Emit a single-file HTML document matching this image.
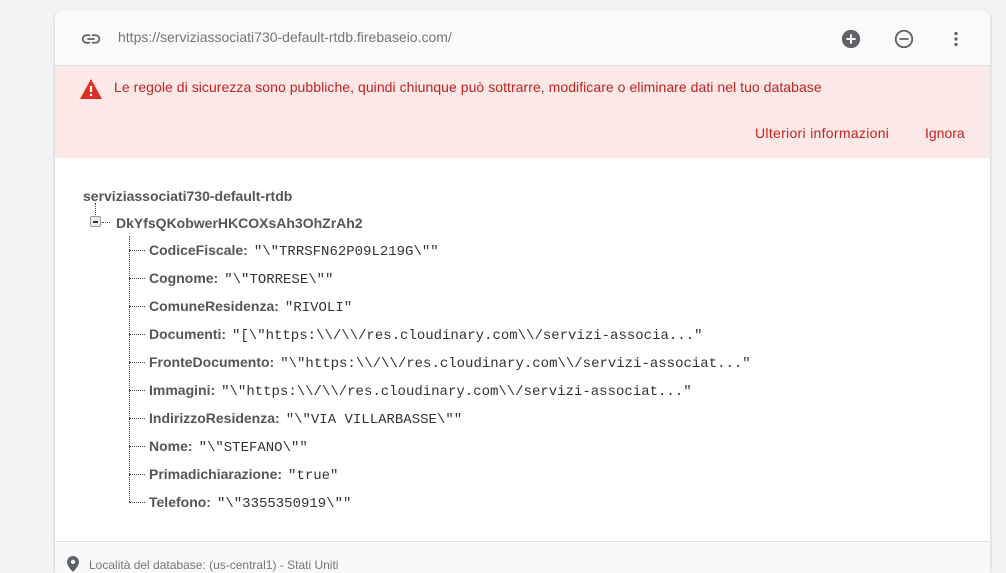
<!DOCTYPE html>
<html><head><meta charset="utf-8"><style>
*{box-sizing:border-box;margin:0;padding:0}
html,body{width:1006px;height:573px;overflow:hidden}
body{background:#f1f3f4;font-family:"Liberation Sans",sans-serif;position:relative}
.card{position:absolute;left:55px;top:10px;width:935px;height:563px;background:#fff;border-radius:8px 8px 0 0;box-shadow:0 1px 3px rgba(0,0,0,.2);overflow:hidden}
.hdr{height:56px;background:#fafafa;border-bottom:1px solid #e0e0e0;position:relative}
.url{position:absolute;left:63px;top:19px;font-size:14px;color:#757575}
.alert{height:92px;background:#fce8e6;position:relative;color:#c5221f;font-size:14px}
.t{position:absolute;white-space:nowrap}
.k{font-weight:bold;color:#555;font-size:14px}
.v{font-family:"Liberation Mono",monospace;color:#333;font-size:14px;margin-left:6px;font-weight:normal}
.row{position:absolute;left:94px;white-space:nowrap;line-height:16px}
.hl{position:absolute;left:74px;width:16px;border-top:1px dotted #444}
.foot{position:absolute;left:0;top:531px;width:935px;height:40px;background:#f8f9fa;border-top:1px solid #e0e0e0}
</style></head><body>
<div class="card">
 <div class="hdr">
  <svg style="position:absolute;left:25px;top:18px" width="22" height="22" viewBox="0 0 24 24"><path fill="#5f6368" d="M3.9 12c0-1.71 1.39-3.1 3.1-3.1h4V7H7c-2.76 0-5 2.240-5 5s2.24 5 5 5h4v-1.9H7c-1.71 0-3.1-1.39-3.1-3.1zM8 13h8v-2H8v2zm9-6h-4v1.9h4c1.71 0 3.1 1.39 3.1 3.1s-1.39 3.1-3.1 3.1h-4V17h4c2.76 0 5-2.24 5-5s-2.24-5-5-5z"/></svg>
  <div class="url">https://serviziassociati730-default-rtdb.firebaseio.com/</div>
  <svg style="position:absolute;left:785px;top:18px" width="22" height="22" viewBox="0 0 24 24"><circle cx="12" cy="12" r="10" fill="#5f6368"/><path d="M12 7v10M7 12h10" stroke="#fff" stroke-width="2.2"/></svg>
  <svg style="position:absolute;left:838px;top:18px" width="22" height="22" viewBox="0 0 24 24"><circle cx="12" cy="12" r="9" fill="none" stroke="#5f6368" stroke-width="2"/><path d="M7 12h10" stroke="#5f6368" stroke-width="2"/></svg>
  <svg style="position:absolute;left:890px;top:18px" width="22" height="22" viewBox="0 0 24 24"><circle cx="12" cy="6" r="1.8" fill="#5f6368"/><circle cx="12" cy="12" r="1.8" fill="#5f6368"/><circle cx="12" cy="18" r="1.8" fill="#5f6368"/></svg>
 </div>
 <div class="alert">
  <svg style="position:absolute;left:24px;top:12px" width="24" height="22" viewBox="0 0 24 22"><path d="M12 1L23 21H1z" fill="#d93025"/><path d="M12 8v6" stroke="#fff" stroke-width="2.2"/><circle cx="12" cy="17" r="1.2" fill="#fff"/></svg>
  <div class="t" style="left:59px;top:13px;letter-spacing:0.05px">Le regole di sicurezza sono pubbliche, quindi chiunque può sottrarre, modificare o eliminare dati nel tuo database</div>
  <div class="t" style="left:700px;top:59px;letter-spacing:0.3px">Ulteriori informazioni</div>
  <div class="t" style="left:870px;top:59px">Ignora</div>
 </div>
 <div class="t k" style="left:28px;top:178px">serviziassociati730-default-rtdb</div>
 <div style="position:absolute;left:40px;top:193px;height:12px;border-left:1px dotted #444"></div>
 <div style="position:absolute;left:35px;top:206px;width:11px;height:11px;border:1px solid #999;background:#eee;border-radius:2px"><div style="position:absolute;left:2px;top:4px;width:5px;height:2px;background:#333"></div></div>
 <div style="position:absolute;left:47px;top:212px;width:8px;border-top:1px dotted #444"></div>
 <div class="t k" style="left:61px;top:205px">DkYfsQKobwerHKCOXsAh3OhZrAh2</div>
 <div style="position:absolute;left:74px;top:226px;height:266px;border-left:1px dotted #444"></div>
 <div class="hl" style="top:240px"></div><div class="row" style="top:232px"><span class="k">CodiceFiscale:</span><span class="v">"\"TRRSFN62P09L219G\""</span></div>
 <div class="hl" style="top:268px"></div><div class="row" style="top:260px"><span class="k">Cognome:</span><span class="v">"\"TORRESE\""</span></div>
 <div class="hl" style="top:296px"></div><div class="row" style="top:288px"><span class="k">ComuneResidenza:</span><span class="v">"RIVOLI"</span></div>
 <div class="hl" style="top:324px"></div><div class="row" style="top:316px"><span class="k">Documenti:</span><span class="v">"[\"https:\\/\\/res.cloudinary.com\\/servizi-associa..."</span></div>
 <div class="hl" style="top:352px"></div><div class="row" style="top:344px"><span class="k">FronteDocumento:</span><span class="v">"\"https:\\/\\/res.cloudinary.com\\/servizi-associat..."</span></div>
 <div class="hl" style="top:380px"></div><div class="row" style="top:372px"><span class="k">Immagini:</span><span class="v">"\"https:\\/\\/res.cloudinary.com\\/servizi-associat..."</span></div>
 <div class="hl" style="top:408px"></div><div class="row" style="top:400px"><span class="k">IndirizzoResidenza:</span><span class="v">"\"VIA VILLARBASSE\""</span></div>
 <div class="hl" style="top:436px"></div><div class="row" style="top:428px"><span class="k">Nome:</span><span class="v">"\"STEFANO\""</span></div>
 <div class="hl" style="top:464px"></div><div class="row" style="top:456px"><span class="k">Primadichiarazione:</span><span class="v">"true"</span></div>
 <div class="hl" style="top:492px"></div><div class="row" style="top:484px"><span class="k">Telefono:</span><span class="v">"\"3355350919\""</span></div>
 <div class="foot">
  <svg style="position:absolute;left:12px;top:14px" width="12" height="16" viewBox="0 0 12 16"><path d="M6 0C2.7 0 0 2.6 0 5.9 0 10.3 6 16 6 16s6-5.7 6-10.1C12 2.6 9.3 0 6 0zm0 8a2.1 2.1 0 110-4.2A2.1 2.1 0 016 8z" fill="#5f6368"/></svg>
  <div class="t" style="left:34px;top:16px;font-size:12px;color:#757575">Località del database: (us-central1) - Stati Uniti</div>
 </div>
</div>
</body></html>
